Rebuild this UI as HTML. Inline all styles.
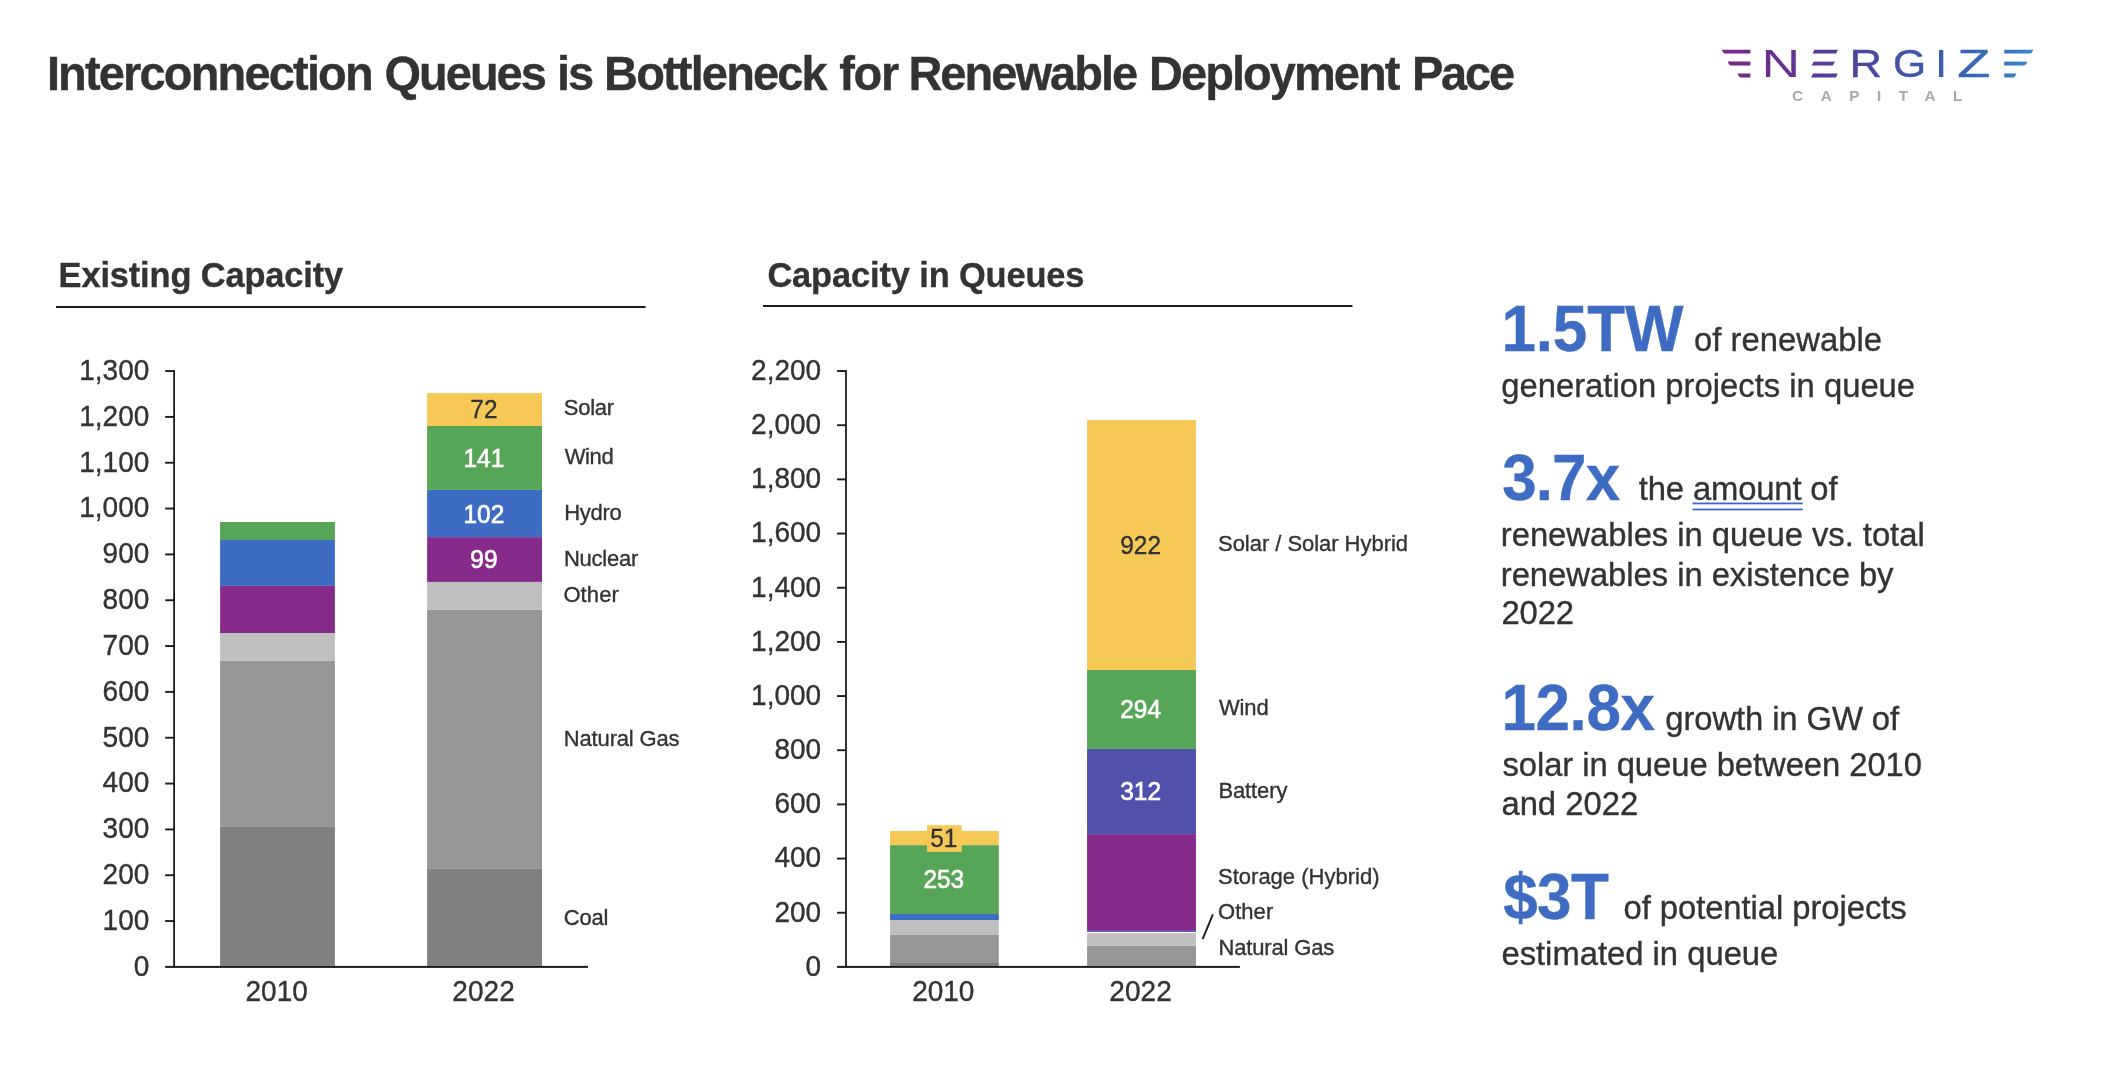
<!DOCTYPE html>
<html lang="en"><head><meta charset="utf-8"><title>Interconnection Queues is Bottleneck for Renewable Deployment Pace</title>
<style>
html,body{margin:0;padding:0;background:#fff;}
body{width:2108px;height:1076px;overflow:hidden;}
svg{display:block;will-change:transform;font-family:"Liberation Sans",Arial,Helvetica,sans-serif;}
.ax{font-size:28px;fill:#333;stroke:#333;stroke-width:0.35px;text-anchor:end;}
</style></head><body>
<svg width="2108" height="1076" viewBox="0 0 2108 1076">
<defs>
<clipPath id="ce1"><path d="M1721.7 49.5H1750.3V78H1740.6Q1738.4 76.6 1737.3 72.8V66H1730.9Q1728.6 64.6 1727.6 61.2V54.3H1725Q1722.7 53 1721.7 49.5Z"/></clipPath>
<clipPath id="ce2"><path d="M1814.6 49.5H1838L1835.6 54.3H1812.2ZM1813.9 61.2H1835L1832.6 66H1811.5ZM1813.4 72.8H1838L1835.6 78H1811Z"/></clipPath>
<clipPath id="ce3"><path d="M2004.3 49.5H2033.3Q2032.4 53 2030 54.3H2004.3ZM2004.3 61.2H2027.4Q2026.4 64.6 2024 66H2004.3ZM2004.3 72.8H2016.6Q2015.6 76.6 2013.2 78H2004.3Z"/></clipPath>
</defs>
<rect width="2108" height="1076" fill="#fff"/>

<g id="title"><text transform="translate(0 90.0) scale(1 1.035)" font-size="47" font-weight="bold" fill="#333333" stroke="#333333" stroke-width="0.35"><tspan x="46.9" letter-spacing="-1.83">Interconnection </tspan><tspan x="384.6" letter-spacing="-2.011">Queues </tspan><tspan x="557.0" letter-spacing="-2.058">is </tspan><tspan x="604.1" letter-spacing="-1.838">Bottleneck </tspan><tspan x="839.3" letter-spacing="-1.38">for </tspan><tspan x="908.4" letter-spacing="-1.949">Renewable </tspan><tspan x="1149.1" letter-spacing="-1.948">Deployment </tspan><tspan x="1411.9" letter-spacing="-2.142">Pace</tspan></text></g>
<g id="heads"><text transform="translate(58.6 286.9) scale(1 1.03)" font-size="34.4" font-weight="bold" fill="#333333" stroke="#333333" stroke-width="0.35" letter-spacing="-0.134">Existing Capacity</text><text transform="translate(767.4 286.8) scale(1 1.03)" font-size="34.4" font-weight="bold" fill="#333333" stroke="#333333" stroke-width="0.35" letter-spacing="-0.12">Capacity in Queues</text>
<rect x="56" y="306" width="589.5" height="2" fill="#1c1c1c"/>
<rect x="763" y="305" width="589.5" height="2" fill="#1c1c1c"/>
</g>
<g id="chart1">
<rect x="220.1" y="826.9" width="114.8" height="139.0" fill="#808080"/>
<rect x="220.1" y="660.8" width="114.8" height="166.1" fill="#969696"/>
<rect x="220.1" y="633" width="114.8" height="27.8" fill="#BFBFBF"/>
<rect x="220.1" y="585.9" width="114.8" height="47.1" fill="#872B8B"/>
<rect x="220.1" y="540" width="114.8" height="45.9" fill="#3F6CC3"/>
<rect x="220.1" y="522" width="114.8" height="18" fill="#57A556"/>
<rect x="427.1" y="868.9" width="114.9" height="97.0" fill="#808080"/>
<rect x="427.1" y="609.9" width="114.9" height="259.0" fill="#969696"/>
<rect x="427.1" y="581.9" width="114.9" height="28.0" fill="#BFBFBF"/>
<rect x="427.1" y="537.1" width="114.9" height="44.8" fill="#872B8B"/>
<rect x="427.1" y="489.9" width="114.9" height="47.2" fill="#3F6CC3"/>
<rect x="427.1" y="426" width="114.9" height="63.9" fill="#57A556"/>
<rect x="427.1" y="393.1" width="114.9" height="32.9" fill="#F6C956"/>
<rect x="173.2" y="370.1" width="1.8" height="597.8" fill="#1c1c1c"/>
<rect x="165.2" y="965.9" width="422.8" height="2.0" fill="#1c1c1c"/>
<text class="ax" transform="translate(149.3 975.75) scale(1 1.04)">0</text>
<rect x="165.2" y="920.12" width="8.8" height="1.9" fill="#1c1c1c"/>
<text class="ax" transform="translate(149.3 929.92) scale(1 1.04)">100</text>
<rect x="165.2" y="874.28" width="8.8" height="1.9" fill="#1c1c1c"/>
<text class="ax" transform="translate(149.3 884.08) scale(1 1.04)">200</text>
<rect x="165.2" y="828.45" width="8.8" height="1.9" fill="#1c1c1c"/>
<text class="ax" transform="translate(149.3 838.25) scale(1 1.04)">300</text>
<rect x="165.2" y="782.61" width="8.8" height="1.9" fill="#1c1c1c"/>
<text class="ax" transform="translate(149.3 792.41) scale(1 1.04)">400</text>
<rect x="165.2" y="736.78" width="8.8" height="1.9" fill="#1c1c1c"/>
<text class="ax" transform="translate(149.3 746.58) scale(1 1.04)">500</text>
<rect x="165.2" y="690.95" width="8.8" height="1.9" fill="#1c1c1c"/>
<text class="ax" transform="translate(149.3 700.75) scale(1 1.04)">600</text>
<rect x="165.2" y="645.11" width="8.8" height="1.9" fill="#1c1c1c"/>
<text class="ax" transform="translate(149.3 654.91) scale(1 1.04)">700</text>
<rect x="165.2" y="599.28" width="8.8" height="1.9" fill="#1c1c1c"/>
<text class="ax" transform="translate(149.3 609.08) scale(1 1.04)">800</text>
<rect x="165.2" y="553.45" width="8.8" height="1.9" fill="#1c1c1c"/>
<text class="ax" transform="translate(149.3 563.25) scale(1 1.04)">900</text>
<rect x="165.2" y="507.61" width="8.8" height="1.9" fill="#1c1c1c"/>
<text class="ax" transform="translate(149.3 517.41) scale(1 1.04)">1,000</text>
<rect x="165.2" y="461.78" width="8.8" height="1.9" fill="#1c1c1c"/>
<text class="ax" transform="translate(149.3 471.58) scale(1 1.04)">1,100</text>
<rect x="165.2" y="415.94" width="8.8" height="1.9" fill="#1c1c1c"/>
<text class="ax" transform="translate(149.3 425.74) scale(1 1.04)">1,200</text>
<rect x="165.2" y="370.11" width="8.8" height="1.9" fill="#1c1c1c"/>
<text class="ax" transform="translate(149.3 379.91) scale(1 1.04)">1,300</text>
<text transform="translate(483.9 418.1) scale(1 1.04)" font-size="24.4" fill="#303238" stroke="#303238" stroke-width="0.35" text-anchor="middle">72</text>
<text transform="translate(483.9 466.5) scale(1 1.04)" font-size="24.4" fill="#fff" stroke="#fff" stroke-width="0.6" text-anchor="middle">141</text>
<text transform="translate(483.9 522.7) scale(1 1.04)" font-size="24.4" fill="#fff" stroke="#fff" stroke-width="0.6" text-anchor="middle">102</text>
<text transform="translate(483.9 567.7) scale(1 1.04)" font-size="24.4" fill="#fff" stroke="#fff" stroke-width="0.6" text-anchor="middle">99</text>
<text transform="translate(563.7 414.9) scale(1 1.03)" font-size="22" fill="#333333" stroke="#333333" stroke-width="0.35" letter-spacing="-0.233">Solar</text>
<text transform="translate(564.7 464.0) scale(1 1.03)" font-size="22" fill="#333333" stroke="#333333" stroke-width="0.35" letter-spacing="-0.396">Wind</text>
<text transform="translate(564.2 519.9) scale(1 1.03)" font-size="22" fill="#333333" stroke="#333333" stroke-width="0.35" letter-spacing="-0.262">Hydro</text>
<text transform="translate(563.9 565.8) scale(1 1.03)" font-size="22" fill="#333333" stroke="#333333" stroke-width="0.35" letter-spacing="-0.23">Nuclear</text>
<text transform="translate(563.4 601.8) scale(1 1.03)" font-size="22" fill="#333333" stroke="#333333" stroke-width="0.35" letter-spacing="0.101">Other</text>
<text transform="translate(563.8 746.1) scale(1 1.03)" font-size="22" fill="#333333" stroke="#333333" stroke-width="0.35" letter-spacing="-0.158">Natural Gas</text>
<text transform="translate(563.8 924.5) scale(1 1.03)" font-size="22" fill="#333333" stroke="#333333" stroke-width="0.35" letter-spacing="-0.253">Coal</text>
<text transform="translate(245.6 1000.6) scale(1 1.04)" font-size="28" fill="#333333" stroke="#333333" stroke-width="0.35" letter-spacing="-0.039">2010</text><text transform="translate(452.3 1000.6) scale(1 1.04)" font-size="28" fill="#333333" stroke="#333333" stroke-width="0.35" letter-spacing="0.061">2022</text>
</g>
<g id="chart2">
<rect x="890.07" y="963" width="108.73" height="2.9" fill="#808080"/>
<rect x="890.07" y="934.9" width="108.73" height="28.1" fill="#969696"/>
<rect x="890.07" y="920.0" width="108.73" height="14.9" fill="#BFBFBF"/>
<rect x="890.07" y="914.0" width="108.73" height="6.0" fill="#3F6CC3"/>
<rect x="890.07" y="845.1" width="108.73" height="68.9" fill="#57A556"/>
<rect x="890.07" y="831.0" width="108.73" height="14.1" fill="#F6C956"/>
<rect x="927.06" y="825.2" width="34.74" height="26.7" fill="#F6C956"/>
<rect x="1087.07" y="945.9" width="108.88" height="20.0" fill="#969696"/>
<rect x="1087.07" y="933.1" width="108.88" height="12.8" fill="#BFBFBF"/>
<rect x="1087.07" y="930.9" width="108.88" height="1.1" fill="#3F6CC3"/>
<rect x="1087.07" y="834.1" width="108.88" height="96.8" fill="#872B8B"/>
<rect x="1087.07" y="748.9" width="108.88" height="85.2" fill="#4F51AB"/>
<rect x="1087.07" y="670.0" width="108.88" height="78.9" fill="#57A556"/>
<rect x="1087.07" y="420" width="108.88" height="250.0" fill="#F6C956"/>
<rect x="845.1" y="370.1" width="1.8" height="597.8" fill="#1c1c1c"/>
<rect x="837.05" y="965.9" width="402.85" height="2.0" fill="#1c1c1c"/>
<text class="ax" transform="translate(821.1 975.75) scale(1 1.04)">0</text>
<rect x="837.05" y="911.78" width="8.95" height="1.9" fill="#1c1c1c"/>
<text class="ax" transform="translate(821.1 921.58) scale(1 1.04)">200</text>
<rect x="837.05" y="857.62" width="8.95" height="1.9" fill="#1c1c1c"/>
<text class="ax" transform="translate(821.1 867.42) scale(1 1.04)">400</text>
<rect x="837.05" y="803.45" width="8.95" height="1.9" fill="#1c1c1c"/>
<text class="ax" transform="translate(821.1 813.25) scale(1 1.04)">600</text>
<rect x="837.05" y="749.28" width="8.95" height="1.9" fill="#1c1c1c"/>
<text class="ax" transform="translate(821.1 759.08) scale(1 1.04)">800</text>
<rect x="837.05" y="695.11" width="8.95" height="1.9" fill="#1c1c1c"/>
<text class="ax" transform="translate(821.1 704.91) scale(1 1.04)">1,000</text>
<rect x="837.05" y="640.95" width="8.95" height="1.9" fill="#1c1c1c"/>
<text class="ax" transform="translate(821.1 650.75) scale(1 1.04)">1,200</text>
<rect x="837.05" y="586.78" width="8.95" height="1.9" fill="#1c1c1c"/>
<text class="ax" transform="translate(821.1 596.58) scale(1 1.04)">1,400</text>
<rect x="837.05" y="532.61" width="8.95" height="1.9" fill="#1c1c1c"/>
<text class="ax" transform="translate(821.1 542.41) scale(1 1.04)">1,600</text>
<rect x="837.05" y="478.44" width="8.95" height="1.9" fill="#1c1c1c"/>
<text class="ax" transform="translate(821.1 488.24) scale(1 1.04)">1,800</text>
<rect x="837.05" y="424.28" width="8.95" height="1.9" fill="#1c1c1c"/>
<text class="ax" transform="translate(821.1 434.08) scale(1 1.04)">2,000</text>
<rect x="837.05" y="370.11" width="8.95" height="1.9" fill="#1c1c1c"/>
<text class="ax" transform="translate(821.1 379.91) scale(1 1.04)">2,200</text>
<text transform="translate(912.2 1000.6) scale(1 1.04)" font-size="28" fill="#333333" stroke="#333333" stroke-width="0.35" letter-spacing="-0.039">2010</text><text transform="translate(1109.3 1000.6) scale(1 1.04)" font-size="28" fill="#333333" stroke="#333333" stroke-width="0.35" letter-spacing="0.061">2022</text>
<text transform="translate(1140.6 553.5) scale(1 1.04)" font-size="24.4" fill="#303238" stroke="#303238" stroke-width="0.35" text-anchor="middle">922</text>
<text transform="translate(1140.6 717.5) scale(1 1.04)" font-size="24.4" fill="#fff" stroke="#fff" stroke-width="0.6" text-anchor="middle">294</text>
<text transform="translate(1140.6 799.8) scale(1 1.04)" font-size="24.4" fill="#fff" stroke="#fff" stroke-width="0.6" text-anchor="middle">312</text>
<text transform="translate(943.8 887.8) scale(1 1.04)" font-size="24.4" fill="#fff" stroke="#fff" stroke-width="0.6" text-anchor="middle">253</text>
<text transform="translate(943.8 846.7) scale(1 1.04)" font-size="24.4" fill="#303238" stroke="#303238" stroke-width="0.35" text-anchor="middle">51</text>
<text transform="translate(1218 550.6) scale(1 1.03)" font-size="22" fill="#333333" stroke="#333333" stroke-width="0.35" letter-spacing="-0.037">Solar / Solar Hybrid</text>
<text transform="translate(1219 714.6) scale(1 1.03)" font-size="22" fill="#333333" stroke="#333333" stroke-width="0.35" letter-spacing="-0.163">Wind</text>
<text transform="translate(1218.4 797.5) scale(1 1.03)" font-size="22" fill="#333333" stroke="#333333" stroke-width="0.35" letter-spacing="-0.116">Battery</text>
<text transform="translate(1218 883.9) scale(1 1.03)" font-size="22" fill="#333333" stroke="#333333" stroke-width="0.35" letter-spacing="0.009">Storage (Hybrid)</text>
<text transform="translate(1218 919.1) scale(1 1.03)" font-size="22" fill="#333333" stroke="#333333" stroke-width="0.35" letter-spacing="0.051">Other</text>
<text transform="translate(1218.4 955.2) scale(1 1.03)" font-size="22" fill="#333333" stroke="#333333" stroke-width="0.35" letter-spacing="-0.148">Natural Gas</text>
<line x1="1212.9" y1="914.3" x2="1202.6" y2="939.1" stroke="#1c1c1c" stroke-width="1.9"/>
</g>
<g id="stats">
<text transform="translate(1501.5 350.8) scale(1 1.045)" font-size="62" font-weight="bold" fill="#3F6CC3" stroke="#3F6CC3" stroke-width="0.35" letter-spacing="-0.165">1.5TW</text>
<text transform="translate(1694.0 351.0)" font-size="32.8" fill="#333333" stroke="#333333" stroke-width="0.35" letter-spacing="0.013">of renewable</text>
<text transform="translate(1501.2 396.6)" font-size="32.8" fill="#333333" stroke="#333333" stroke-width="0.35">generation projects in queue</text>
<text transform="translate(1502.2 500.0) scale(1 1.045)" font-size="62" font-weight="bold" fill="#3F6CC3" stroke="#3F6CC3" stroke-width="0.35" letter-spacing="-0.896">3.7x</text>
<text transform="translate(1638.8 500.0)" font-size="32.8" fill="#333333" stroke="#333333" stroke-width="0.35" letter-spacing="-0.154">the amount of</text>
<text transform="translate(1500.8 545.7)" font-size="32.8" fill="#333333" stroke="#333333" stroke-width="0.35" letter-spacing="-0.033">renewables in queue vs. total</text>
<text transform="translate(1500.8 585.7)" font-size="32.8" fill="#333333" stroke="#333333" stroke-width="0.35" letter-spacing="-0.044">renewables in existence by</text>
<text transform="translate(1501.4 623.7) scale(1 1.03)" font-size="32.8" fill="#333333" stroke="#333333" stroke-width="0.35" letter-spacing="-0.107">2022</text>
<text transform="translate(1501.5 730.0) scale(1 1.045)" font-size="62" font-weight="bold" fill="#3F6CC3" stroke="#3F6CC3" stroke-width="0.35" letter-spacing="-0.417">12.8x</text>
<text transform="translate(1665.3 730.0)" font-size="32.8" fill="#333333" stroke="#333333" stroke-width="0.35" letter-spacing="-0.101">growth in GW of</text>
<text transform="translate(1502.4 775.7)" font-size="32.8" fill="#333333" stroke="#333333" stroke-width="0.35" letter-spacing="-0.061">solar in queue between 2010</text>
<text transform="translate(1501.4 815.2)" font-size="32.8" fill="#333333" stroke="#333333" stroke-width="0.35" letter-spacing="-0.007">and 2022</text>
<text transform="translate(1503.2 919.0) scale(1 1.045)" font-size="62" font-weight="bold" fill="#3F6CC3" stroke="#3F6CC3" stroke-width="0.35" letter-spacing="-0.6">$3T</text>
<text transform="translate(1623.5 919.0)" font-size="32.8" fill="#333333" stroke="#333333" stroke-width="0.35" letter-spacing="-0.061">of potential projects</text>
<text transform="translate(1501.4 964.9)" font-size="32.8" fill="#333333" stroke="#333333" stroke-width="0.35" letter-spacing="-0.012">estimated in queue</text>
<rect x="1692.5" y="502.55" width="110.3" height="1.75" fill="#3C62D8"/>
<rect x="1692.5" y="508.6" width="110.3" height="1.75" fill="#3C62D8"/>
</g>
<g id="logo" font-size="39" role="img" aria-label="ENERGIZE CAPITAL"><title>ENERGIZE</title>
<linearGradient id="lg1" gradientUnits="userSpaceOnUse" x1="9.43" y1="0" x2="144.0" y2="0"><stop offset="0" stop-color="#7C2886"/><stop offset="0.18" stop-color="#6A2F8E"/><stop offset="0.33" stop-color="#553C98"/><stop offset="0.5" stop-color="#484BA0"/><stop offset="0.62" stop-color="#3E55A9"/><stop offset="0.8" stop-color="#3567B4"/><stop offset="0.93" stop-color="#3879C0"/><stop offset="1" stop-color="#3A88CB"/></linearGradient><g clip-path="url(#ce1)"><text fill="url(#lg1)" stroke="url(#lg1)" stroke-width="0.9" transform="translate(1700.2 77.0) scale(2.311 1.0)">E</text></g>
<linearGradient id="lg2" gradientUnits="userSpaceOnUse" x1="-28.86" y1="0" x2="197.74" y2="0"><stop offset="0" stop-color="#7C2886"/><stop offset="0.18" stop-color="#6A2F8E"/><stop offset="0.33" stop-color="#553C98"/><stop offset="0.5" stop-color="#484BA0"/><stop offset="0.62" stop-color="#3E55A9"/><stop offset="0.8" stop-color="#3567B4"/><stop offset="0.93" stop-color="#3879C0"/><stop offset="1" stop-color="#3A88CB"/></linearGradient><text fill="url(#lg2)" transform="translate(1761.61 77.0) scale(1.372 1)">N</text>
<linearGradient id="lg3" gradientUnits="userSpaceOnUse" x1="-30.55" y1="0" x2="107.87" y2="0"><stop offset="0" stop-color="#7C2886"/><stop offset="0.18" stop-color="#6A2F8E"/><stop offset="0.33" stop-color="#553C98"/><stop offset="0.5" stop-color="#484BA0"/><stop offset="0.62" stop-color="#3E55A9"/><stop offset="0.8" stop-color="#3567B4"/><stop offset="0.93" stop-color="#3879C0"/><stop offset="1" stop-color="#3A88CB"/></linearGradient><g clip-path="url(#ce2)"><text fill="url(#lg3)" stroke="url(#lg3)" stroke-width="0.9" transform="translate(1790.64 77.0) scale(2.247 1.0)">E</text></g>
<linearGradient id="lg4" gradientUnits="userSpaceOnUse" x1="-110.08" y1="0" x2="158.64" y2="0"><stop offset="0" stop-color="#7C2886"/><stop offset="0.18" stop-color="#6A2F8E"/><stop offset="0.33" stop-color="#553C98"/><stop offset="0.5" stop-color="#484BA0"/><stop offset="0.62" stop-color="#3E55A9"/><stop offset="0.8" stop-color="#3567B4"/><stop offset="0.93" stop-color="#3879C0"/><stop offset="1" stop-color="#3A88CB"/></linearGradient><text fill="url(#lg4)" stroke="url(#lg4)" stroke-width="0.45" transform="translate(1849.4 77.0) scale(1.157 1)">R</text><linearGradient id="lg5" gradientUnits="userSpaceOnUse" x1="-156.66" y1="0" x2="128.16" y2="0"><stop offset="0" stop-color="#7C2886"/><stop offset="0.18" stop-color="#6A2F8E"/><stop offset="0.33" stop-color="#553C98"/><stop offset="0.5" stop-color="#484BA0"/><stop offset="0.62" stop-color="#3E55A9"/><stop offset="0.8" stop-color="#3567B4"/><stop offset="0.93" stop-color="#3879C0"/><stop offset="1" stop-color="#3A88CB"/></linearGradient><text fill="url(#lg5)" stroke="url(#lg5)" stroke-width="0.45" transform="translate(1893.06 77.0) scale(1.092 1)">G</text><linearGradient id="lg6" gradientUnits="userSpaceOnUse" x1="-180.04" y1="0" x2="83.03" y2="0"><stop offset="0" stop-color="#7C2886"/><stop offset="0.18" stop-color="#6A2F8E"/><stop offset="0.33" stop-color="#553C98"/><stop offset="0.5" stop-color="#484BA0"/><stop offset="0.62" stop-color="#3E55A9"/><stop offset="0.8" stop-color="#3567B4"/><stop offset="0.93" stop-color="#3879C0"/><stop offset="1" stop-color="#3A88CB"/></linearGradient><text fill="url(#lg6)" transform="translate(1934.85 77.0) scale(1.182 1)">I</text><linearGradient id="lg7" gradientUnits="userSpaceOnUse" x1="-169.26" y1="0" x2="54.47" y2="0"><stop offset="0" stop-color="#7C2886"/><stop offset="0.18" stop-color="#6A2F8E"/><stop offset="0.33" stop-color="#553C98"/><stop offset="0.5" stop-color="#484BA0"/><stop offset="0.62" stop-color="#3E55A9"/><stop offset="0.8" stop-color="#3567B4"/><stop offset="0.93" stop-color="#3879C0"/><stop offset="1" stop-color="#3A88CB"/></linearGradient><text fill="url(#lg7)" stroke="url(#lg7)" stroke-width="0.45" transform="translate(1957.28 77.0) scale(1.39 1)">Z</text>
<linearGradient id="lg8" gradientUnits="userSpaceOnUse" x1="-113.45" y1="0" x2="21.12" y2="0"><stop offset="0" stop-color="#7C2886"/><stop offset="0.18" stop-color="#6A2F8E"/><stop offset="0.33" stop-color="#553C98"/><stop offset="0.5" stop-color="#484BA0"/><stop offset="0.62" stop-color="#3E55A9"/><stop offset="0.8" stop-color="#3567B4"/><stop offset="0.93" stop-color="#3879C0"/><stop offset="1" stop-color="#3A88CB"/></linearGradient><g clip-path="url(#ce3)"><text fill="url(#lg8)" stroke="url(#lg8)" stroke-width="0.9" transform="translate(1984.2 77.0) scale(2.311 1.0)">E</text></g>
<text x="1792.1" y="100.6" font-size="15.2" font-weight="bold" fill="#a9a9a9" letter-spacing="17.6">CAPITAL</text>
</g>
</svg></body></html>
